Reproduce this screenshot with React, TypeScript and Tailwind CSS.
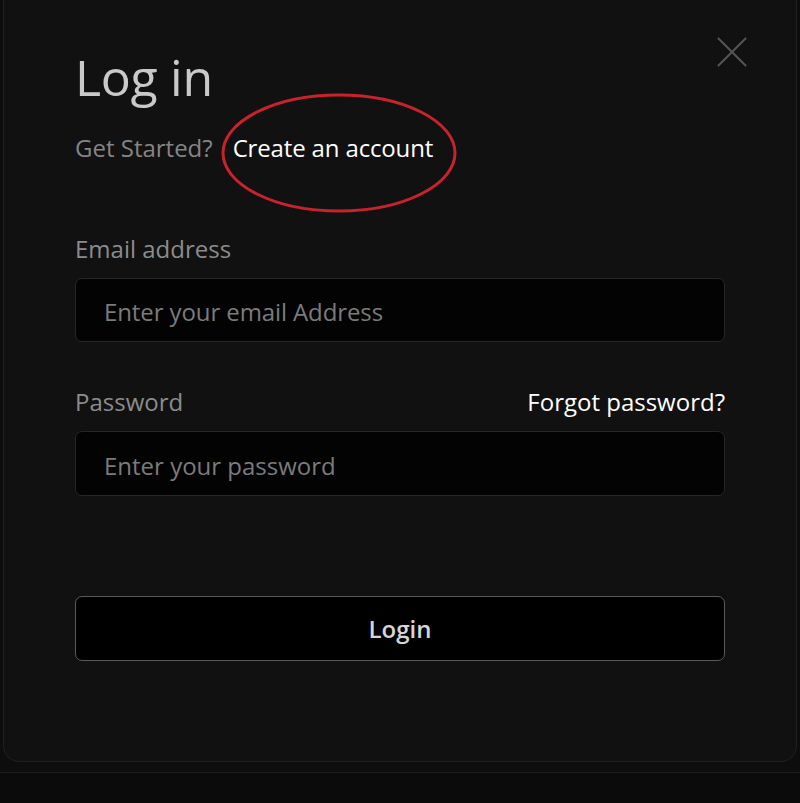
import React from "react";

export default function App() {
  const font = { fontFamily: '"Open Sans", "Noto Sans", sans-serif' };
  return (
    <div className="relative w-[800px] h-[803px] bg-[#0b0b0b] overflow-hidden" style={font}>
      <div className="h-[773px] border-b border-[#1c1c1c] bg-[#0d0d0d]">
        <div className="relative mx-[3px] h-[762px] bg-[#111111] rounded-b-[16px] border border-t-0 border-[#1f1f1f] pl-[71px] pr-[71px] pt-[52px]">
          <button className="absolute left-[713px] top-[37px] w-[30px] h-[30px]">
            <svg width="30" height="30" viewBox="0 0 30 30">
              <path d="M1 1 L29 29 M29 1 L1 29" stroke="#555555" strokeWidth="2" fill="none" />
            </svg>
          </button>
          <h1 className="text-[50px] leading-[50px] text-[#c9c9c9] font-normal tracking-[-0.3px]">Log in</h1>
          <div className="mt-[31px] flex items-center gap-[20px] text-[24px] leading-[30px]">
            <span className="text-[#858585]">Get Started?</span>
            <span className="relative text-white tracking-[-0.15px]">
              Create an account
              <svg className="absolute left-[-12px] top-[-40px]" width="236" height="120" viewBox="0 0 236 120">
                <ellipse cx="118" cy="60" rx="116" ry="58" stroke="#c8232b" strokeWidth="3" fill="none" />
              </svg>
            </span>
          </div>
          <label className="block mt-[71px] text-[24px] leading-[30px] text-[#8c8c8c]">Email address</label>
          <div className="mt-[14px] h-[64px] rounded-[7px] border border-[#262626] bg-[#030303] flex items-center pl-[28px] pt-[4px] text-[24px] text-[#7b7b7b] tracking-[-0.1px]">
            Enter your email Address
          </div>
          <div className="mt-[45px] flex items-center justify-between text-[24px] leading-[30px]">
            <span className="text-[#8c8c8c]">Password</span>
            <span className="text-white">Forgot password?</span>
          </div>
          <div className="mt-[14px] h-[65px] rounded-[7px] border border-[#262626] bg-[#030303] flex items-center pl-[28px] pt-[4px] text-[24px] text-[#7b7b7b]">
            Enter your password
          </div>
          <button className="mt-[100px] w-full h-[65px] rounded-[7px] border border-[#5a5a5a] bg-black flex items-center justify-center text-[24px] font-semibold text-[#d6d6d6]">
            Login
          </button>
        </div>
      </div>
    </div>
  );
}
